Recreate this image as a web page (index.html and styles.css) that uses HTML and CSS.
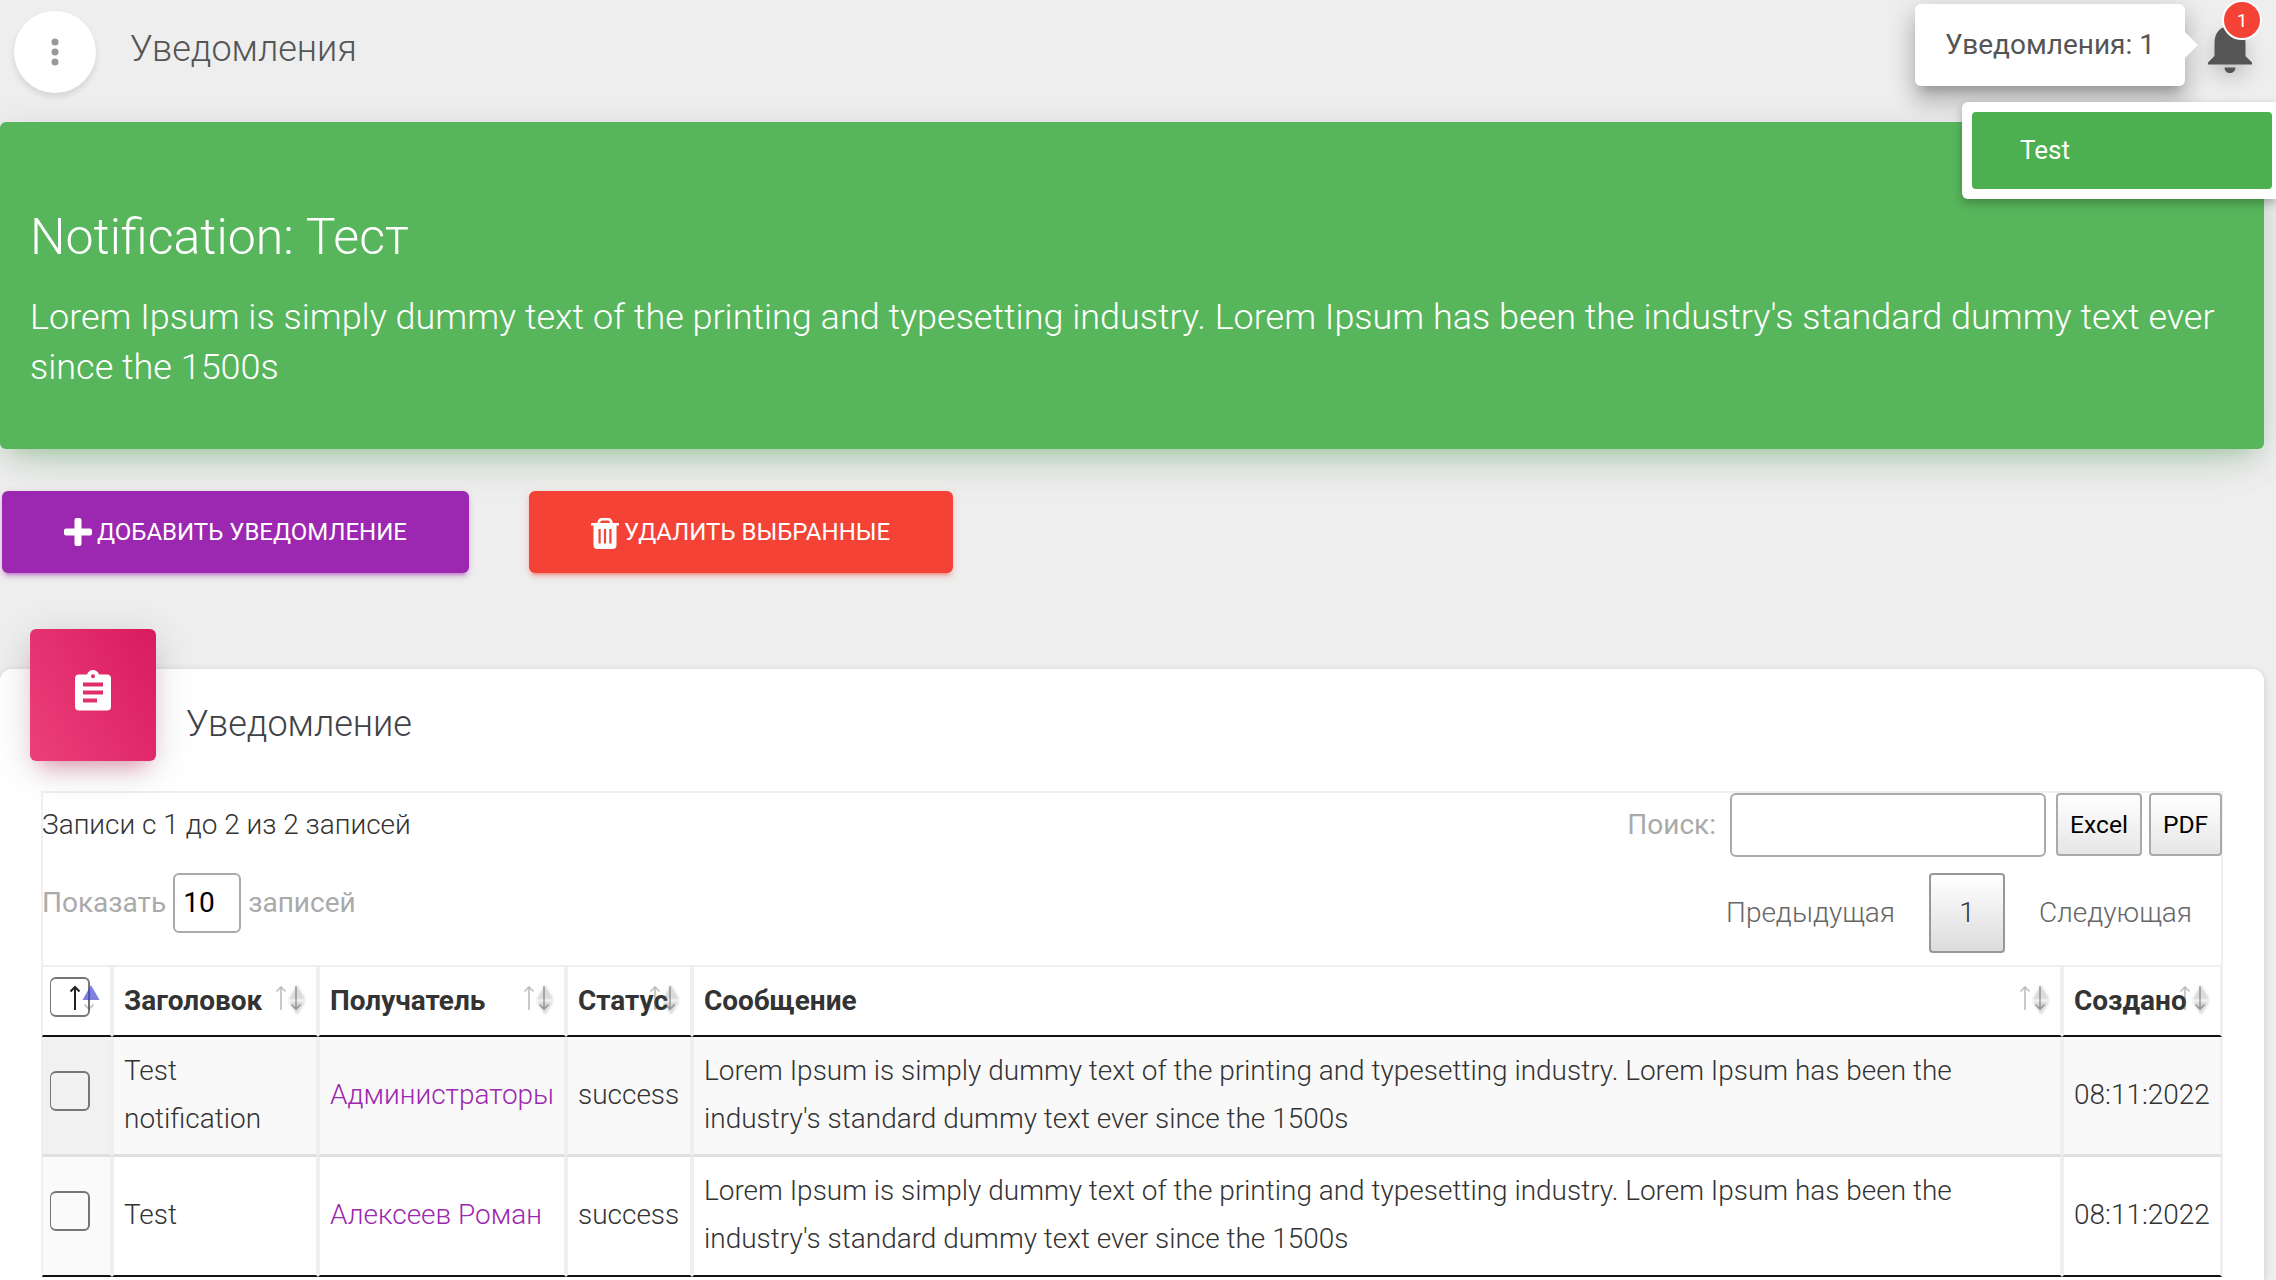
FILE: index.html
```html
<!DOCTYPE html>
<html lang="ru">
<head>
<meta charset="utf-8">
<title>Уведомления</title>
<link rel="stylesheet" href="styles.css">
</head>
<body>
<svg class="sprite" aria-hidden="true">
  <symbol id="sort" viewBox="0 0 36 36">
    <path class="tri" d="M24 3l8.500 14.500h-17z M15.500 19.500h17L24 33z"/>
    <path class="arrow-up" d="M8 28V5M3.500 9.500L8 5l4.500 4.500"/>
    <path class="arrow-down" d="M23 4v23M18.500 22.500L23 27l4.500-4.500"/>
  </symbol>
  <symbol id="sort-asc" viewBox="0 0 36 36">
    <path class="tri-asc" d="M24 3l8.500 15h-17z"/>
    <path class="arrow-asc" d="M8 28V5M3.500 9.500L8 5l4.500 4.500"/>
    <path class="arrow-up" d="M22 18v9M17.500 22.500L22 27l4.500-4.500"/>
  </symbol>
</svg>

<header class="topbar">
  <button class="menu-btn" aria-label="Меню">
    <svg width="8" height="28" viewBox="0 0 8 28"><circle cx="4" cy="4" r="3.500"/><circle cx="4" cy="14" r="3.500"/><circle cx="4" cy="24" r="3.500"/></svg>
  </button>
  <h1 class="page-title">Уведомления</h1>
  <div class="bell">
    <svg class="bell-icon" width="44" height="50" viewBox="0 0 44 50"><path d="M22 1C12 1 6.500 8 6.500 18V31L0 37.500V39.500H44V37.500L37.500 31V18C37.500 8 32 1 22 1ZM16.500 42.500C16.500 46 19 48 22 48S27.500 46 27.500 42.500Z"/></svg>
    <span class="badge">1</span>
    <div class="tooltip">Уведомления: 1</div>
    <div class="dropdown"><a class="dropdown-item">Test</a></div>
  </div>
</header>

<section class="alert">
  <h2>Notification: Тест</h2>
  <p>Lorem Ipsum is simply dummy text of the printing and typesetting industry. Lorem Ipsum has been the industry's standard dummy text ever since the 1500s</p>
</section>

<div class="actions">
  <button class="btn btn-add">
    <svg width="28" height="28" viewBox="0 0 28 28"><path d="M12.500 0h3a2 2 0 0 1 2 2v8.500H26a2 2 0 0 1 2 2v3a2 2 0 0 1-2 2h-8.500V26a2 2 0 0 1-2 2h-3a2 2 0 0 1-2-2v-8.500H2a2 2 0 0 1-2-2v-3a2 2 0 0 1 2-2h8.500V2a2 2 0 0 1 2-2z"/></svg>
    <span>Добавить уведомление</span>
  </button>
  <button class="btn btn-del">
    <svg width="28" height="31" viewBox="0 0 28 31"><path fill-rule="evenodd" d="M10.500 0h7q3 0 4 4l.3 1H27a1 1 0 0 1 1 1v1.500H25.500V27q0 4-4 4h-15q-4 0-4-4V7.500H0V6a1 1 0 0 1 1-1h5.200l.3-1q1-4 4-4zM11 2.500q-1 0-1.500 1L9 5h10l-.5-1.500q-.5-1-1.500-1zM7.500 11v14.500h2.200V11zM12.900 11v14.500h2.200V11zM18.300 11v14.500h2.200V11z"/></svg>
    <span>Удалить выбранные</span>
  </button>
</div>

<main class="card">
  <div class="card-header">
    <div class="card-icon">
      <svg width="36" height="41" viewBox="0 0 36 41"><path fill-rule="evenodd" d="M4 4.500H12C13 1.500 15.300 0 18 0S23 1.500 24 4.500H32A4 4 0 0 1 36 8.500V36.500A4 4 0 0 1 32 40.500H4A4 4 0 0 1 0 36.500V8.500A4 4 0 0 1 4 4.500ZM18 4.300A2 2 0 1 0 18 8.300A2 2 0 1 0 18 4.300ZM8 12.500V16.500H28V12.500ZM8 20.500V24.500H28V20.500ZM8 28.500V32.500H22V28.500Z"/></svg>
    </div>
    <h3>Уведомление</h3>
  </div>

  <div class="table-box">
    <div class="bar bar-top">
      <span class="info">Записи с 1 до 2 из 2 записей</span>
      <label class="search">Поиск:<input type="text"></label>
      <button class="export excel">Excel</button>
      <button class="export pdf">PDF</button>
    </div>
    <div class="bar bar-pages">
      <div class="length">Показать <span class="select">10</span> записей</div>
      <nav class="pager"><span>Предыдущая</span><b>1</b><span>Следующая</span></nav>
    </div>
    <table>
      <colgroup><col class="c-check"><col class="c-title"><col class="c-to"><col class="c-status"><col class="c-msg"><col class="c-date"></colgroup>
      <thead>
        <tr>
          <th class="check"><i class="box"></i><svg class="sort"><use href="#sort-asc"/></svg></th>
          <th>Заголовок<svg class="sort"><use href="#sort"/></svg></th>
          <th>Получатель<svg class="sort"><use href="#sort"/></svg></th>
          <th>Статус<svg class="sort"><use href="#sort"/></svg></th>
          <th>Сообщение<svg class="sort"><use href="#sort"/></svg></th>
          <th>Создано<svg class="sort"><use href="#sort"/></svg></th>
        </tr>
      </thead>
      <tbody>
        <tr class="odd">
          <td class="check"><i class="box"></i></td>
          <td>Test notification</td>
          <td><a>Администраторы</a></td>
          <td>success</td>
          <td>Lorem Ipsum is simply dummy text of the printing and typesetting industry. Lorem Ipsum has been the industry's standard dummy text ever since the 1500s</td>
          <td>08:11:2022</td>
        </tr>
        <tr class="even">
          <td class="check"><i class="box"></i></td>
          <td>Test</td>
          <td><a>Алексеев Роман</a></td>
          <td>success</td>
          <td>Lorem Ipsum is simply dummy text of the printing and typesetting industry. Lorem Ipsum has been the industry's standard dummy text ever since the 1500s</td>
          <td>08:11:2022</td>
        </tr>
      </tbody>
    </table>
  </div>
</main>
</body>
</html>
```
FILE: styles.css
```css
* { box-sizing: border-box; }

body {
  margin: 0;
  background: #eee;
  color: #333;
  font: 300 27.970px/48px Roboto, "Liberation Sans", sans-serif;
}

h1, h2, h3, p { margin: 0; font-weight: 300; }
button, input { font-family: inherit; margin: 0; }
svg { display: block; flex: none; }
.sprite { position: absolute; width: 0; height: 0; }

/* Top bar */
.topbar {
  position: relative;
  z-index: 2;
  display: flex;
  align-items: flex-start;
  height: 122px;
  padding: 11px 24px 0 14px;
}
.menu-btn {
  display: flex;
  align-items: center;
  justify-content: center;
  width: 82px;
  height: 82px;
  padding: 0;
  border: 0;
  border-radius: 50%;
  background: #fff;
  box-shadow: 0 4px 5px rgba(153, 153, 153, .2), 0 4px 8px rgba(0, 0, 0, .04);
}
.menu-btn svg { fill: #999; }
.page-title {
  margin-left: 34px;
  padding-top: 13px;
  color: #555;
  font-size: 36px;
  line-height: 50px;
}
.bell { position: relative; margin: 14px 0 0 auto; width: 44px; height: 50px; }
.bell-icon { fill: #555; filter: drop-shadow(0 8px 10px rgba(0, 0, 0, .2)); }
.badge {
  position: absolute;
  left: 14px;
  top: -25px;
  width: 40px;
  height: 40px;
  border: 2px solid #fff;
  border-radius: 50%;
  background: #f44336;
  color: #fff;
  font-size: 19px;
  font-weight: 400;
  line-height: 37px;
  text-align: center;
}
.tooltip {
  position: absolute;
  right: 67px;
  top: -21px;
  width: 270px;
  height: 82px;
  border-radius: 6px;
  background: #fff;
  box-shadow: 0 16px 20px 2px rgba(0, 0, 0, .14), 0 6px 28px 4px rgba(0, 0, 0, .12), 0 10px 10px -6px rgba(0, 0, 0, .2);
  color: #555;
  font-weight: 400;
  font-size: 28px;
  line-height: 81px;
  text-align: center;
}
.tooltip::after {
  content: "";
  position: absolute;
  left: 100%;
  top: 28px;
  border: 13px solid transparent;
  border-left-color: #fff;
  border-right-width: 0;
}
.dropdown {
  position: absolute;
  left: -246px;
  top: 77px;
  width: 314px;
  height: 97px;
  padding: 10px 4px 10px 10px;
  border-radius: 6px 0 0 6px;
  background: #fff;
  box-shadow: 0 4px 10px rgba(0, 0, 0, .26);
}
.dropdown-item {
  display: block;
  height: 77px;
  padding-left: 48px;
  border-radius: 4px;
  background: #4caf50;
  color: #fff;
  font-size: 26px;
  font-weight: 400;
  line-height: 77px;
}

/* Green notification */
.alert {
  width: 2264px;
  height: 327px;
  padding: 80px 40px 57px 30px;
  border-radius: 6px;
  background: #57b55b;
  box-shadow: 0 24px 40px -20px rgba(76, 175, 80, .28), 0 8px 40px rgba(0, 0, 0, .1), 0 14px 16px -10px rgba(76, 175, 80, .2);
  color: #fff;
}
.alert h2 { font-size: 50px; line-height: 70px; }
.alert p { margin-top: 20px; font-size: 35.970px; line-height: 50px; }

/* Buttons */
.actions { display: flex; gap: 60px; padding: 42px 0 0 2px; }
.btn {
  display: flex;
  align-items: center;
  gap: 5px;
  height: 82px;
  padding: 0 61px;
  border: 0;
  border-radius: 6px;
  color: #fff;
  fill: #fff;
  font-size: 24px;
  font-weight: 400;
  text-transform: uppercase;
  white-space: nowrap;
}
.btn-add { width: 467px; padding-left: 62px; background: #9c27b0; box-shadow: 0 4px 4px rgba(156, 39, 176, .2), 0 6px 2px -4px rgba(156, 39, 176, .3), 0 2px 10px rgba(156, 39, 176, .12); }
.btn-del { width: 424px; padding-left: 62px; background: #f44336; box-shadow: 0 4px 4px rgba(244, 67, 54, .2), 0 6px 2px -4px rgba(244, 67, 54, .3), 0 2px 10px rgba(244, 67, 54, .12); }
.btn-del svg { margin-top: 3px; }

/* Card */
.card {
  width: 2264px;
  height: 611px;
  margin-top: 96px;
  border-radius: 12px 12px 0 0;
  background: #fff;
  box-shadow: 0 2px 8px rgba(0, 0, 0, .14);
}
.card-header { display: flex; height: 122px; padding-left: 30px; }
.card-icon {
  display: flex;
  justify-content: center;
  width: 126px;
  height: 132px;
  margin-top: -40px;
  padding-top: 41px;
  border-radius: 6px;
  background: linear-gradient(60deg, #ec407a, #d81b60);
  box-shadow: 0 8px 40px rgba(0, 0, 0, .14), 0 14px 20px -10px rgba(233, 30, 99, .4);
  fill: #fff;
}
.card-header h3 {
  margin-left: 30px;
  padding-top: 30px;
  color: #3f4347;
  font-size: 36px;
  line-height: 50px;
}

/* Table controls */
.table-box { width: 2182px; margin-left: 41px; border: 2px solid #f0f0f0; border-bottom: 0; }
.bar { display: flex; justify-content: space-between; margin-left: -1px; white-space: nowrap; }
.bar-top { height: 64px; }
.info { flex: 1; line-height: 64px; }
.search { display: flex; color: #aaa; font-weight: 400; font-size: 28px; line-height: 64px; }
.search input {
  width: 316px;
  height: 64px;
  margin-left: 14px;
  border: 2px solid #aaa;
  border-radius: 6px;
  background: transparent;
}
.export {
  height: 63px;
  padding: 0;
  border: 2px solid #aaa;
  border-radius: 4px;
  background: linear-gradient(#fff, #e6e6e6);
  color: #000;
  font-size: 24.600px;
  font-weight: 400;
}
.excel { width: 86px; margin-left: 10px; }
.pdf { width: 73px; margin: 0 -1px 0 7px; }
.bar-pages { height: 80px; margin-top: 16px; margin-bottom: 12px; }
.length { display: flex; height: 60px; gap: 7px; color: #aaa; font-weight: 400; font-size: 28px; line-height: 60px; }
.select {
  width: 68px;
  border: 2px solid #aaa;
  border-radius: 6px;
  padding-left: 8px;
  color: #000;
  line-height: 56px;
}
.pager { display: flex; line-height: 80px; color: #666; padding-right: 29px; }
.pager b {
  width: 76px;
  margin: 0 34px;
  border: 2px solid #979797;
  border-radius: 4px;
  background: linear-gradient(#fff, #dcdcdc);
  color: #333;
  font-weight: 300;
  line-height: 76px;
  text-align: center;
}

/* Table */
table { table-layout: fixed; width: 2180px; margin-left: -1px; border-collapse: separate; border-spacing: 0; }
.c-check { width: 70px; }
.c-title { width: 206px; }
.c-to { width: 248px; }
.c-status { width: 126px; }
.c-msg { width: 1370px; }
.c-date { width: 160px; }
th, td {
  position: relative;
  height: 120px;
  padding: 0 10px 2px 10px;
  border: 0 solid #efefef;
  border-width: 0 2px 2px;
  text-align: left;
  vertical-align: middle;
}
th { height: 72px; padding-bottom: 1px; border-top-width: 2px; border-bottom-color: #111; font-weight: 700; white-space: nowrap; }
th.check { padding: 0 0 9px 7px; }
td.check { padding: 0 0 10px 7px; }
tr :first-child { border-left-width: 1px; }
.odd td { padding-bottom: 2px; background: #f9f9f9; border-bottom: 3px solid #e0e0e0; }
.odd td.check { padding-bottom: 10px; background: #f1f1f1; }
.even .check { background: #fafafa; }
.even td { border-bottom-color: #111; }
td:last-child, th:last-child { padding-right: 0; }
a { color: #9c27b0; white-space: nowrap; }
.box { display: block; width: 40px; height: 40px; border: 2px solid #767676; border-radius: 6px; }

/* Sort arrows lie over the header labels */
.sort { position: absolute; right: 7px; top: 15px; width: 36px; height: 36px; overflow: visible; }
.tri { fill: rgba(120, 120, 120, .28); filter: blur(1px); }
.tri-asc { fill: rgba(60, 60, 205, .65); filter: blur(.6px); }
.arrow-up, .arrow-down, .arrow-asc { fill: none; stroke: rgba(90, 90, 90, .4); stroke-width: 1.600; }
.arrow-down { stroke: rgba(70, 70, 70, .45); }
.arrow-asc { stroke: #222; stroke-width: 2; }
```
